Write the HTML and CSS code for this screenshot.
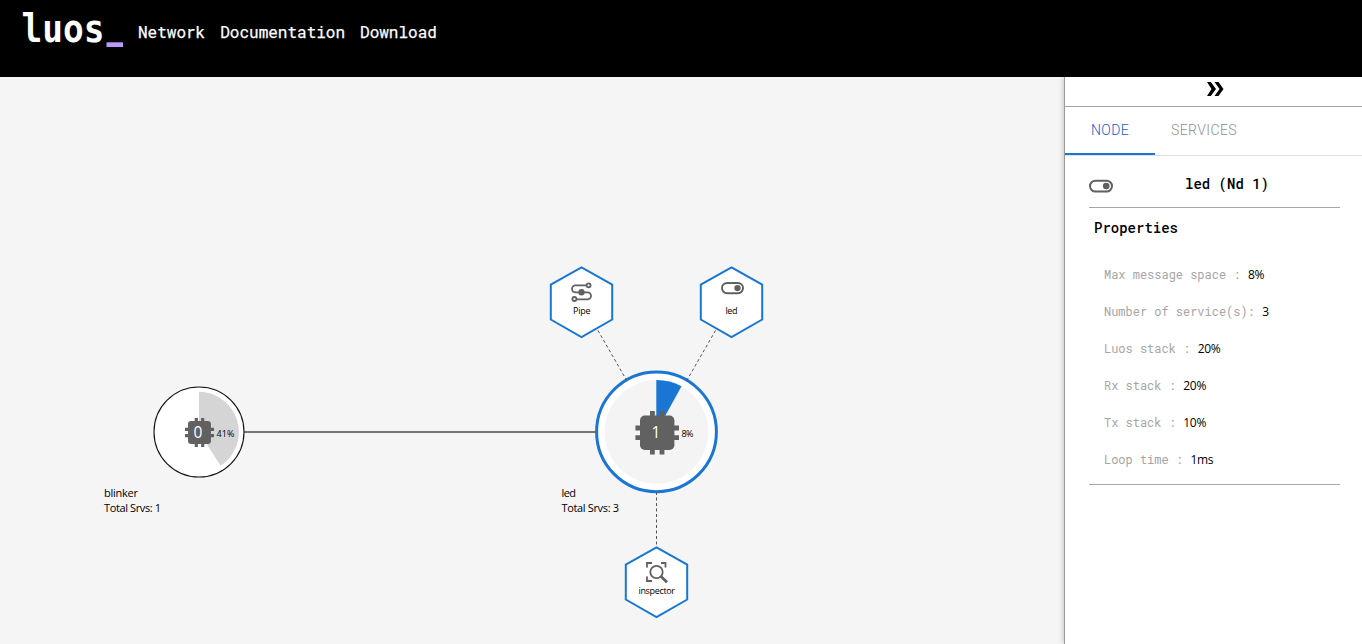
FILE: index.html
```html
<!DOCTYPE html>
<html lang="en">
<head>
<meta charset="utf-8">
<title>Luos Network</title>
<link rel="stylesheet" href="styles.css">
</head>
<body>
<svg class="defs" width="0" height="0" aria-hidden="true">
  <symbol id="chip" viewBox="-24 -24 48 48">
    <rect x="-17.2" y="-17.2" width="34.4" height="34.4" rx="4.8"/>
    <path d="M-7.2-21.8h4.8v43.6h-4.8zM2.4-21.8h4.8v43.6h-4.8zM-21.8-7.2h43.6v4.8h-43.6zM-21.8 2.4h43.6v4.8h-43.6z"/>
  </symbol>
  <symbol id="toggle" viewBox="0 0 24 24">
    <rect x="1" y="6.7" width="22" height="10.8" rx="5.4" fill="none" stroke="currentColor" stroke-width="2"/>
    <circle cx="17.2" cy="12.1" r="3.3" fill="currentColor"/>
  </symbol>
</svg>
<header class="topbar">
  <svg class="logo" width="123" height="64" viewBox="0 0 123 64">
    <text class="logo-text" x="21.500" y="42.300" textLength="83" lengthAdjust="spacingAndGlyphs">luos</text>
    <rect class="logo-bar" x="106.500" y="42.300" width="16.500" height="4.700"/>
  </svg>
  <nav class="nav"><a>Network</a><a>Documentation</a><a>Download</a></nav>
</header>
<main class="main">
  <svg class="graph" width="1064" height="567" viewBox="0 77 1064 567">
    <line class="link" x1="244" y1="432" x2="597" y2="432"/>
    <!-- blinker node -->
    <circle class="node" cx="199" cy="432" r="45"/>
    <path class="usage" d="M199 432V391.800A40.200 40.200 0 0 1 220.600 465.700Z"/>
    <use class="icon" href="#chip" x="183.500" y="416.500" width="32" height="32"/>
    <text class="chip-num" x="193.500" y="437.500" textLength="9">0</text>
    <text class="small" x="216.500" y="437" textLength="18">41%</text>
    <text class="label" x="104" y="497" textLength="34">blinker</text>
    <text class="label" x="104" y="512" textLength="57">Total Srvs: 1</text>
    <!-- led node -->
    <circle class="node-active" cx="656.500" cy="431.800" r="59.900"/>
    <circle class="disc" cx="656.500" cy="431.800" r="51.800"/>
    <path class="usage-active" d="M656.300 432V380A52 52 0 0 1 681.500 386.300Z"/>
    <use class="icon" href="#chip" x="633.200" y="408.800" width="48" height="48"/>
    <text class="chip-num" x="651.500" y="437.500" textLength="9">1</text>
    <text class="small" x="681.500" y="437" textLength="12">8%</text>
    <text class="label" x="561.500" y="497" textLength="14.500">led</text>
    <text class="label" x="561.500" y="512" textLength="57.500">Total Srvs: 3</text>
    <path class="dash" d="M598 330.500L627 381M715.500 330.500L686.500 381M656.500 492V547"/>
    <!-- services -->
    <path class="hex" d="M581.500 267.300L612.200 284.700V319.500L581.500 337L550.800 319.500V284.700Z"/>
    <path class="hex" d="M731.500 267.300L762.200 284.700V319.500L731.500 337L700.800 319.500V284.700Z"/>
    <path class="hex" d="M656.500 547.300L687.200 564.700V599.500L656.500 617L625.800 599.500V564.700Z"/>
    <g class="pipe">
      <path d="M586.300 285.300H575.500a3.500 3.500 0 0 0 0 7H587.500a3.500 3.500 0 0 1 0 7H577"/>
      <circle cx="588.600" cy="285.300" r="2"/>
      <circle cx="574.400" cy="299" r="2"/>
      <circle class="fill" cx="581.500" cy="292.300" r="2.300"/>
    </g>
    <use class="icon" href="#toggle" x="721" y="276.500" width="23" height="23"/>
    <g class="inspect">
      <path d="M647 567.500V563H652M661 563H665.500V567.500M647 576.500V581H652"/>
      <circle cx="656.500" cy="572" r="6.200"/>
      <path class="handle" d="M661 576.500L667 582.300"/>
    </g>
    <text class="small" x="573" y="314" textLength="17.500">Pipe</text>
    <text class="small" x="725.500" y="314" textLength="12">led</text>
    <text class="small" x="638.500" y="594" textLength="36.500">inspector</text>
  </svg>
  <aside class="panel">
    <div class="collapse">
      <svg width="17" height="14" viewBox="0 0 17 14"><path d="M0 0H3.800L9 7L3.800 14H0L4.500 7ZM7.500 0H11.500L16.500 7L11.500 14H7.500L12.500 7Z"/></svg>
    </div>
    <div class="tabs"><div class="tab tab-active">NODE</div><div class="tab">SERVICES</div></div>
    <section class="details">
      <div class="title"><svg class="title-icon" width="24" height="24"><use href="#toggle" width="24" height="24"/></svg><h1>led (Nd 1)</h1></div>
      <h2>Properties</h2>
      <dl class="props">
        <div><dt>Max message space :</dt><dd>8%</dd></div>
        <div><dt>Number of service(s):</dt><dd>3</dd></div>
        <div><dt>Luos stack :</dt><dd>20%</dd></div>
        <div><dt>Rx stack :</dt><dd>20%</dd></div>
        <div><dt>Tx stack :</dt><dd>10%</dd></div>
        <div><dt>Loop time :</dt><dd>1ms</dd></div>
      </dl>
    </section>
  </aside>
</main>
</body>
</html>
```
FILE: styles.css
```css
* { box-sizing: border-box; }
body {
  margin: 0;
  height: 644px;
  overflow: hidden;
  background: #f5f5f5;
  font-family: "Roboto Mono", "DejaVu Sans Mono", monospace;
}
.defs { display: block; }
.topbar {
  display: flex;
  height: 77px;
  background: #000;
}
.logo { display: block; flex: none; overflow: visible; }
.logo-text { font-family: "DejaVu Sans Mono", monospace; font-size: 39.500px; font-weight: bold; fill: #fff; }
.logo-bar { fill: #ba98ff; }
.nav {
  display: flex;
  gap: 15px;
  padding: 21px 0 0 15px;
  color: #fff;
  font-size: 16px;
  line-height: 21px;
  -webkit-text-stroke: .25px #fff;
}
.main { display: flex; height: 567px; }
.graph { display: block; flex: none; font-family: "Segoe UI", "Open Sans", sans-serif; }
.link { stroke: #757575; stroke-width: 2; }
.node { fill: #fff; stroke: #111; stroke-width: 1.1; }
.node-active { fill: #fff; stroke: #1976d2; stroke-width: 3; }
.disc { fill: #f4f4f4; }
.usage { fill: #d5d5d5; }
.usage-active { fill: #1976d2; }
.icon { fill: #616161; color: #616161; }
.chip-num { font-size: 15.500px; fill: #fff; }
.small { font-size: 9px; fill: #000; }
.label { font-size: 11px; fill: #000; }
.dash { fill: none; stroke: #555; stroke-width: 1; stroke-dasharray: 3 2.500; }
.hex { fill: #fff; stroke: #1976d2; stroke-width: 2; }
.pipe, .inspect { fill: none; stroke: #616161; stroke-width: 1.800; }
.pipe .fill { fill: #616161; }
.inspect .handle { stroke-width: 2.800; }
.panel {
  flex: 1;
  background: #fff;
  border-left: 1px solid #999;
  box-shadow: 0 0 6px rgba(0, 0, 0, .25);
  clip-path: inset(0 0 0 -8px);
}
.collapse {
  display: flex;
  justify-content: center;
  height: 30px;
  padding: 5px 0 0 3px;
  border-bottom: 1px solid #a6a6a6;
}
.tabs {
  display: flex;
  height: 49px;
  border-bottom: 1px solid #e0e0e0;
  font: 300 14px/47px Roboto, sans-serif;
}
.tab { height: 48px; padding: 0 16px; color: #8f8f8f; letter-spacing: .4px; }
.tab-active { width: 90px; padding-left: 26px; border-bottom: 2px solid #1976d2; color: #1460c8; }
.details {
  margin: 0 22px 0 24px;
  border-bottom: 1px solid #a6a6a6;
  height: 329px;
}
.title {
  display: flex;
  height: 52px;
  padding-top: 18px;
  border-bottom: 1px solid #a6a6a6;
}
.title-icon { color: #616161; }
h1, h2 { margin: 0; font-size: 14px; font-weight: 500; line-height: 20px; color: #000; }
h1 { padding-left: 72px; }
h2 { padding: 10px 0 0 5px; }
.props { margin: 18px 0 0 15px; font-size: 12px; }
.props div { display: flex; height: 37px; gap: 7.500px; line-height: 37px; }
dt { color: #a6a6a6; letter-spacing: -0.02px; }
dd { margin: 0; color: #000; font-family: "Segoe UI", "Open Sans", sans-serif; letter-spacing: -.3px; }
```
